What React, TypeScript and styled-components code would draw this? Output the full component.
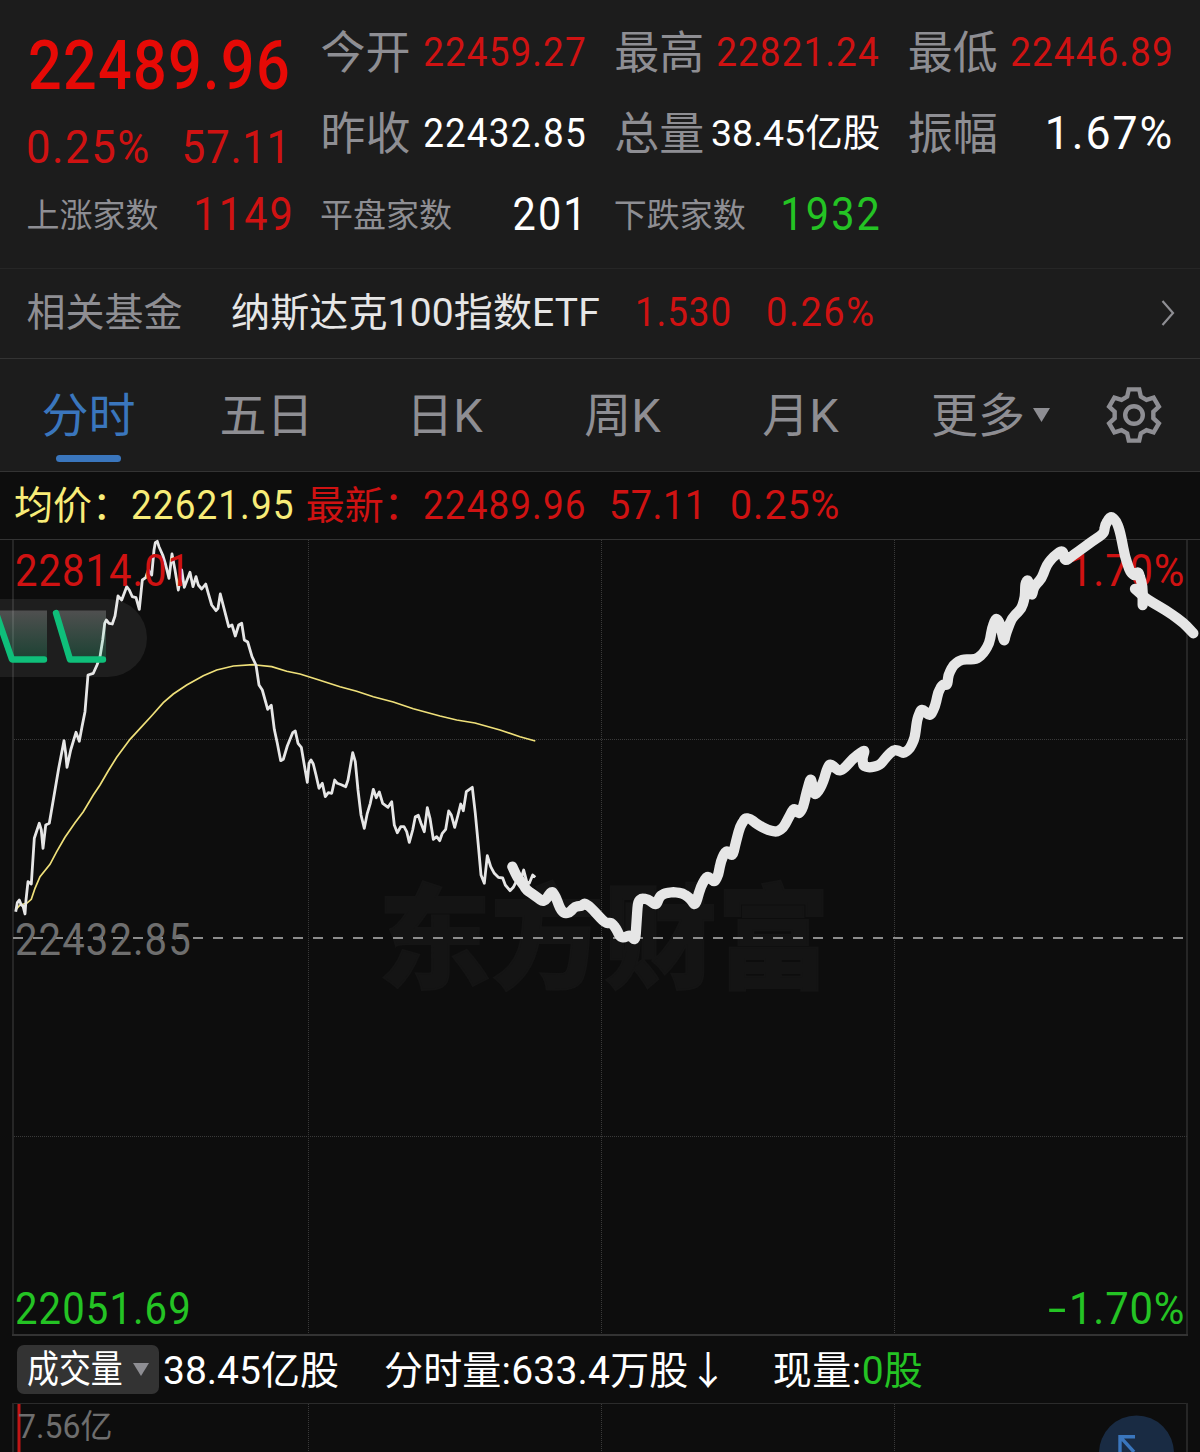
import React from "react";
import styled, { createGlobalStyle } from "styled-components";

const RED = "#cf1212";
const GREEN = "#24c324";
const GREY = "#8e8e93";
const LINE = "#e6e6e6";
const BLUE = "#3a76bd";

const GlobalStyle = createGlobalStyle`
  html, body { margin: 0; padding: 0; background: #0d0d0d; }
  body { font-family: Roboto, "Noto Sans CJK SC", sans-serif; }
`;

const Screen = styled.main`
  width: 1200px;
  height: 1452px;
  overflow: hidden;
  display: flex;
  flex-direction: column;
  background: #0d0d0d;
  color: #fff;
`;

const Text = styled.span<{
  size: number; color?: string; weight?: number; sx?: number; ml?: number; mr?: number;
  dy?: number; from?: "left" | "right"; ls?: number;
}>`
  display: inline-block;
  flex: none;
  white-space: pre;
  line-height: 1.2;
  font-size: ${(p) => p.size}px;
  font-weight: ${(p) => p.weight ?? 400};
  color: ${(p) => p.color ?? "#fff"};
  margin-left: ${(p) => p.ml ?? 0}px;
  margin-right: ${(p) => p.mr ?? 0}px;
  padding-top: ${(p) => p.dy ?? 0}px;
  letter-spacing: ${(p) => p.ls ?? 0}px;
  transform: scaleX(${(p) => p.sx ?? 1});
  transform-origin: ${(p) => p.from ?? "left"} center;
`;

/* ---------- quote header ---------- */

const Quote = styled.header`
  box-sizing: border-box;
  height: 269px;
  flex: none;
  padding: 12px 25px 0 27px;
  background: #1c1c1c;
  border-bottom: 1px solid #262626;
  display: grid;
  grid-template-columns: repeat(4, 266px);
  grid-template-rows: repeat(3, 81px);
  column-gap: 27.6px;
`;

const PriceBlock = styled.div`
  grid-row: 1 / span 2;
  display: flex;
  flex-direction: column;
  padding-top: 2px;
`;

const PriceLine = styled.div<{ h: number }>`
  height: ${(p) => p.h}px;
  flex: none;
  display: flex;
  align-items: center;
  justify-content: space-between;
`;

const Cell = styled.div`
  display: flex;
  align-items: center;
  justify-content: space-between;
`;

/* ---------- related fund ---------- */

const FundRow = styled.section`
  box-sizing: border-box;
  height: 90px;
  flex: none;
  padding: 0 25.5px 2px 26.5px;
  display: flex;
  align-items: center;
  background: #1c1c1c;
  border-bottom: 1px solid #333;
`;

const Spacer = styled.div`
  flex: 1;
`;

/* ---------- tabs ---------- */

const Tabs = styled.nav`
  box-sizing: border-box;
  height: 113px;
  flex: none;
  display: flex;
  background: #1c1c1c;
  border-bottom: 1px solid #333;
`;

const Tab = styled.div<{ active?: boolean }>`
  width: 178px;
  display: flex;
  flex-direction: column;
  align-items: center;
  padding: 27px 1px 0 0;
  box-sizing: border-box;
  &::after {
    content: "";
    width: 65px;
    height: 7px;
    margin-top: 11px;
    border-radius: 4px;
    background: ${(p) => (p.active ? BLUE : "transparent")};
  }
`;

const MoreTab = styled.div`
  width: 174px;
  padding: 27px 0 0 41px;
  box-sizing: border-box;
  display: flex;
  align-items: flex-start;
`;

const Triangle = styled.i<{ w: number; h: number; mt?: number; ml?: number }>`
  flex: none;
  width: ${(p) => p.w}px;
  height: ${(p) => p.h}px;
  margin: ${(p) => p.mt ?? 0}px 0 0 ${(p) => p.ml ?? 0}px;
  background: ${GREY};
  clip-path: polygon(0 0, 100% 0, 50% 100%);
`;

const GearButton = styled.div`
  display: flex;
  align-items: center;
  margin-left: 41px;
`;

/* ---------- info line ---------- */

const Info = styled.div`
  height: 67px;
  flex: none;
  display: flex;
  align-items: center;
  padding-left: 14px;
`;

/* ---------- charts ---------- */

const Chart = styled.section`
  position: relative;
  height: 797px;
  flex: none;
`;

const Overlay = styled.svg`
  display: block;
  overflow: visible;
  position: absolute;
  left: 0;
  top: 0;
`;

const AxisLabel = styled.div<{ y: number; side: "left" | "right" }>`
  position: absolute;
  top: ${(p) => p.y}px;
  ${(p) => (p.side === "left" ? "left: 14.5px;" : "right: 15px;")}
  display: flex;
`;

const Watermark = styled.div`
  position: absolute;
  left: 378px;
  top: 321px;
  font-family: "Noto Sans CJK SC", sans-serif;
  font-weight: 900;
  font-size: 113px;
  line-height: 140px;
  color: #141414;
  -webkit-text-stroke: 2px #141414;
  white-space: nowrap;
`;

const VolumeBar = styled.div`
  height: 67px;
  flex: none;
  box-sizing: border-box;
  padding-left: 17px;
  display: flex;
  align-items: center;
`;

const Chip = styled.div`
  width: 142px;
  height: 49px;
  border-radius: 7px;
  background: #333;
  display: flex;
  align-items: center;
  padding-left: 10px;
  box-sizing: border-box;
`;

const ChipText = styled.div`
  width: 106px;
`;

const VolumeChart = styled.section`
  position: relative;
  flex: 1;
  overflow: hidden;
`;

const pts = (raw: string, ox: number, oy: number) =>
  raw
    .trim()
    .split(/\s+/)
    .map((p) => {
      const [x, y] = p.split(",").map(Number);
      return [ox + x / 3, oy + y / 3];
    });

const toPoints = (a: number[][]) => a.map((p) => p.map((n) => n.toFixed(1)).join(",")).join(" ");

/* Rounds each corner with a quadratic curve near the vertex. */
const smooth = (a: number[][]) => {
  const k = 0.35;
  let d = `M${a[0][0]} ${a[0][1]}`;
  for (let i = 1; i < a.length - 1; i++) {
    const [x, y] = a[i];
    const ax = x + (a[i - 1][0] - x) * k;
    const ay = y + (a[i - 1][1] - y) * k;
    const bx = x + (a[i + 1][0] - x) * k;
    const by = y + (a[i + 1][1] - y) * k;
    d += `L${ax.toFixed(1)} ${ay.toFixed(1)}Q${x.toFixed(1)} ${y.toFixed(1)} ${bx.toFixed(1)} ${by.toFixed(1)}`;
  }
  const e = a[a.length - 1];
  return d + `L${e[0]} ${e[1]}`;
};

const price = [
  ...pts(
    `47,1145 52,1118 58,1110 64,1125 69,1128 75,1152 78,1110 84,1055 94,1062 103,925 118,880 124,900 129,955 137,885
     148,880 165,780 176,715 192,632 197,670 201,712 212,660 228,607 238,634 246,590 255,545 264,435 280,430 291,405
     300,380 308,330 314,280 319,270 327,280 337,282 345,258 354,198 365,210 380,170 388,180 397,200 408,203 418,238
     427,150 437,143 445,120 455,135 462,60 466,38 472,34 477,50 488,75 496,100 507,145 516,72 525,120 535,180 545,120
     553,172 570,127 579,170 588,140 595,165 605,177 617,162 625,190 635,225 648,242 654,235 661,192 672,235 686,290
     696,285 706,318 716,285 725,280 733,330 743,336`,
    0,
    530
  ),
  ...pts(
    `36,50 48,75 57,135 67,150 83,208 94,196 103,268 112,310 122,362 130,358 142,318 158,278 166,273 174,310 184,322
     193,375 202,427 207,370 213,360 220,372 228,405 237,445 247,430 256,470 265,458 275,460 284,420 292,430 304,434
     317,440 324,420 331,380 338,338 346,365 354,450 363,525 373,565 382,520 391,490 400,448 409,473 418,456 428,490
     444,502 455,485 463,555 472,578 482,560 492,560 500,575 508,607 518,570 526,530 535,526 543,550 553,575 562,503
     570,535 580,598 590,590 599,602 607,580 617,568 626,513 634,525 644,562 654,525 662,492 670,512 679,455 697,442
     706,520 715,615 723,705 733,730 742,647 752,680 763,700 775,712 788,714 796,735 810,752 820,742 830,722 842,720
     851,690 860,725 868,730 878,705 886,712`,
    240,
    640
  ),
];

const average = [
  ...pts(
    `47,1140 60,1125 80,1120 94,1108 105,1075 120,1040 150,1003 170,965 195,922 225,878 250,845 280,795 300,765 325,722
     350,682 390,628 425,590 455,557 490,518 520,492 560,465 610,437 650,420 700,408 760,404`,
    0,
    530
  ),
  ...pts(
    `48,75 95,80 140,94 180,102 230,118 300,140 350,154 400,170 460,186 520,206 600,228 650,240 705,249 780,270
     840,290 886,303`,
    240,
    640
  ),
];

const sketch = [
  ...pts(
    `457,80 472,112 487,130 500,150 522,165 552,187 575,152 588,172 600,205 612,220 628,218 645,200 664,198 674,190
     690,200 736,250 754,248 768,265 780,290 792,293 810,285 826,302 830,240 834,185 845,175 864,178 888,196 900,168
     915,160 940,156 968,160 990,175`,
    360,
    840
  ),
  ...pts(
    `46,798 62,740 82,706 103,727 115,705 122,665 138,630 158,649 168,605 180,560 195,535 210,536 235,555 265,570
     290,576 310,563 325,535 342,503 357,523 370,500 380,455 392,413 398,440 404,464 415,455 430,425 440,390 450,370
     475,392 490,388 520,355 555,328 547,355 550,378 570,383 600,375 620,350 640,330 655,332 672,340 690,325 704,295
     712,235 725,205`,
    680,
    640
  ),
  ...pts(
    `30,679 45,650 55,605 68,583 82,585 85,555 100,525 125,508 168,508 190,490 208,460 216,415 228,383 240,400
     252,457 258,430 275,385 305,355 315,320 316,280 324,268 335,320 342,290 365,265 380,225 400,200 428,180 435,214
     460,195 515,155 552,130 555,105 572,78 590,95 600,125 615,200 630,245 645,258 655,243 668,290 668,345`,
    920,
    490
  ),
];

const sketchTail = pts("645,297 680,328 740,362 790,398 820,430", 920, 490);

const gearPoints = Array.from({ length: 6 }, (_, i) => i * 60 - 90)
  .flatMap((t) => [
    [26.2, t - 11.5],
    [26.2, t + 11.5],
    [19.6, t + 20.5],
    [19.6, t + 39.5],
  ])
  .map(([r, a]) => {
    const k = (a * Math.PI) / 180;
    return `${(29 + r * Math.cos(k)).toFixed(2)},${(29 + r * Math.sin(k)).toFixed(2)}`;
  })
  .join(" ");

const Gear = () => (
  <svg width="58" height="58" viewBox="0 0 58 58" fill="none" stroke={GREY} strokeWidth="4.4">
    <polygon points={gearPoints} />
    <circle cx="29" cy="29" r="8.8" />
  </svg>
);

const Chevron = () => (
  <svg width="14" height="28" viewBox="0 0 14 28" fill="none" stroke={GREY} strokeWidth="2.2">
    <path d="M1.5 2 L12 14 L1.5 26" />
  </svg>
);

const stats = [
  { label: "今开", value: "22459.27", size: 41, sx: 0.9, ls: 1.2, color: RED },
  { label: "最高", value: "22821.24", size: 41, sx: 0.9, ls: 1.2, color: RED },
  { label: "最低", value: "22446.89", size: 41, sx: 0.9, ls: 1.2, color: RED },
  { label: "昨收", value: "22432.85", size: 41, sx: 0.9, ls: 1.2, color: "#fff" },
  { label: "总量", value: "38.45亿股", size: 37.5, sx: 1, ls: 0, color: "#fff" },
  { label: "振幅", value: "1.67%", size: 47, sx: 0.95, ls: 2, color: "#fff" },
];

const breadth = [
  { label: "上涨家数", value: "1149", color: RED },
  { label: "平盘家数", value: "201", color: "#fff" },
  { label: "下跌家数", value: "1932", color: GREEN },
];

const tabs = ["分时", "五日", "日K", "周K", "月K"];

export default function App() {
  return (
    <>
      <GlobalStyle />
      <Screen>
        <Quote>
          <PriceBlock>
            <PriceLine h={104}>
              <Text size={69} weight={500} color="#e60a06" sx={0.86} ls={1.5} ml={1}>22489.96</Text>
            </PriceLine>
            <PriceLine h={60}>
              <Text size={46} color={RED} sx={0.95} ls={1.6} ml={-1}>0.25%</Text>
              <Text size={46} color={RED} from="right" sx={0.92} ls={0.7} mr={2}>57.11</Text>
            </PriceLine>
          </PriceBlock>
          {stats.map((s) => (
            <Cell key={s.label}>
              <Text size={45} color={GREY} dy={3}>{s.label}</Text>
              <Text size={s.size} color={s.color} sx={s.sx} ls={s.ls} from="right" ml={-20}>{s.value}</Text>
            </Cell>
          ))}
          {breadth.map((s) => (
            <Cell key={s.label}>
              <Text size={33} color={GREY} dy={3} ml={-0.5}>{s.label}</Text>
              <Text size={46} color={s.color} from="right" sx={0.9} ls={2.4} mr={-2} dy={1}>{s.value}</Text>
            </Cell>
          ))}
        </Quote>

        <FundRow>
          <Text size={39} color={GREY} dy={2}>相关基金</Text>
          <Text size={39} color="#e6e6e6" ml={48.5} dy={2} ls={0.15}>纳斯达克100指数ETF</Text>
          <Text size={40} color={RED} ml={35.5} dy={1} sx={0.92} ls={1}>1.530</Text>
          <Text size={40} color={RED} ml={25} dy={1} sx={0.95} ls={1.6}>0.26%</Text>
          <Spacer />
          <Chevron />
        </FundRow>

        <Tabs>
          {tabs.map((t, i) => (
            <Tab key={t} active={i === 0}>
              <Text size={47} color={i === 0 ? BLUE : GREY} dy={2}>{t}</Text>
            </Tab>
          ))}
          <MoreTab>
            <Text size={47} color={GREY} dy={2}>更多</Text>
            <Triangle w={17} h={14} mt={22} ml={8} />
          </MoreTab>
          <GearButton><Gear /></GearButton>
        </Tabs>

        <Info>
          <Text size={39} color="#f8ec78" dy={2}>均价：</Text>
          <Text size={41} color="#f8ec78" sx={0.9} ls={1.2}>22621.95</Text>
          <Text size={39} color={RED} ml={-7} dy={2}>最新：</Text>
          <Text size={41} color={RED} sx={0.9} ls={1.2}>22489.96</Text>
          <Text size={41} color={RED} ml={5} sx={0.92} ls={0.6}>57.11</Text>
          <Text size={41} color={RED} ml={15} sx={0.96} ls={1}>0.25%</Text>
        </Info>

        <Chart>
          <Watermark>东方财富</Watermark>
          <Overlay width="1200" height="797" viewBox="0 539 1200 797" fill="none">
            <path d="M0 539.5H1200" stroke="#333" />
            <path d="M13 540V1335M1187 540V1335" stroke="#262626" strokeWidth="2" />
            <path d="M12 1335H1188" stroke="#333" strokeWidth="2" />
            <path
              d="M308.5 540V1334M601.5 540V1334M894.5 540V1334M14 739.5H1187M14 1136.5H1187"
              stroke="#3a3a3a"
              strokeDasharray="1 1"
            />
            <path d="M13 938H1187" stroke="#8c8c8c" strokeWidth="2" strokeDasharray="10 10" />
            <polyline points={toPoints(average)} stroke="#efe07a" strokeWidth="1.7" />
            <polyline points={toPoints(price)} stroke={LINE} strokeWidth="2.8" strokeLinejoin="round" />
          </Overlay>
          <AxisLabel y={6} side="left"><Text size={44} color={RED} sx={0.91} ls={1.1}>22814.01</Text></AxisLabel>
          <AxisLabel y={375} side="left"><Text size={44} color="#6e6e6e" sx={0.91} ls={1.2}>22432.85</Text></AxisLabel>
          <AxisLabel y={744} side="left"><Text size={44} color={GREEN} sx={0.91} ls={1.2}>22051.69</Text></AxisLabel>
          <AxisLabel y={6} side="right"><Text size={44} color={RED} from="right" sx={0.95} ls={0.8}>1.70%</Text></AxisLabel>
          <AxisLabel y={744} side="right">
            <Text size={44} color={GREEN} sx={1.5} from="right" mr={-3}>-</Text>
            <Text size={44} color={GREEN} from="right" sx={0.95} ls={0.8}>1.70%</Text>
          </AxisLabel>
          <Overlay width="1200" height="797" viewBox="0 539 1200 797" fill="none">
            <defs>
              <linearGradient id="fade" x1="0" y1="0" x2="0" y2="1">
                <stop offset="0" stopColor="#ffffff" stopOpacity="0.22" />
                <stop offset="1" stopColor="#0fbf7a" stopOpacity="0.22" />
              </linearGradient>
            </defs>
            <path d="M0 599H108A39 39 0 0 1 108 677H0Z" fill="#fff" fillOpacity="0.07" />
            <path d="M-3 610.5H47V660H12Z M56 610.5H106V660H70Z" fill="url(#fade)" />
            <path
              d="M-4 613L12 659.5H44M56 613L70 659.5H103"
              stroke="#0fbf7a"
              strokeWidth="6.4"
              strokeLinecap="round"
              strokeLinejoin="round"
            />
            <g stroke={LINE} strokeWidth="10.3" strokeLinecap="round" strokeLinejoin="round">
              <path d={smooth(sketch)} />
              <path d={smooth(sketchTail)} />
            </g>
          </Overlay>
        </Chart>

        <VolumeBar>
          <Chip>
            <ChipText><Text size={38} sx={0.84}>成交量</Text></ChipText>
            <Triangle w={16} h={13} />
          </Chip>
          <Text size={39} ml={4} dy={3}>38.45亿股</Text>
          <Text size={39} ml={45} dy={3} ls={0.2}>分时量:633.4万股↓</Text>
          <Text size={39} ml={45} dy={3} ls={0.5}>现量:</Text>
          <Text size={39} color={GREEN} dy={3}>0股</Text>
        </VolumeBar>

        <VolumeChart>
          <Overlay width="1200" height="49" viewBox="0 1403 1200 49" fill="none">
            <path d="M12 1403.5H1188" stroke="#2b2b2b" />
            <path d="M13 1403V1452M1187 1403V1452" stroke="#262626" strokeWidth="2" />
            <path d="M308.5 1404V1452M601.5 1404V1452M894.5 1404V1452" stroke="#3a3a3a" strokeDasharray="1 1" />
            <path d="M19 1404V1452" stroke="#c01616" strokeWidth="3" />
            <circle cx="1136.5" cy="1453" r="37.5" fill="#192b43" />
            <path d="M1135 1436.7H1120V1452M1120 1436.7L1134 1452" stroke={BLUE} strokeWidth="3.4" />
          </Overlay>
          <AxisLabel y={4} side="left"><Text size={33} color="#6e6e6e" ml={3} sx={0.97}>7.56亿</Text></AxisLabel>
        </VolumeChart>
      </Screen>
    </>
  );
}
